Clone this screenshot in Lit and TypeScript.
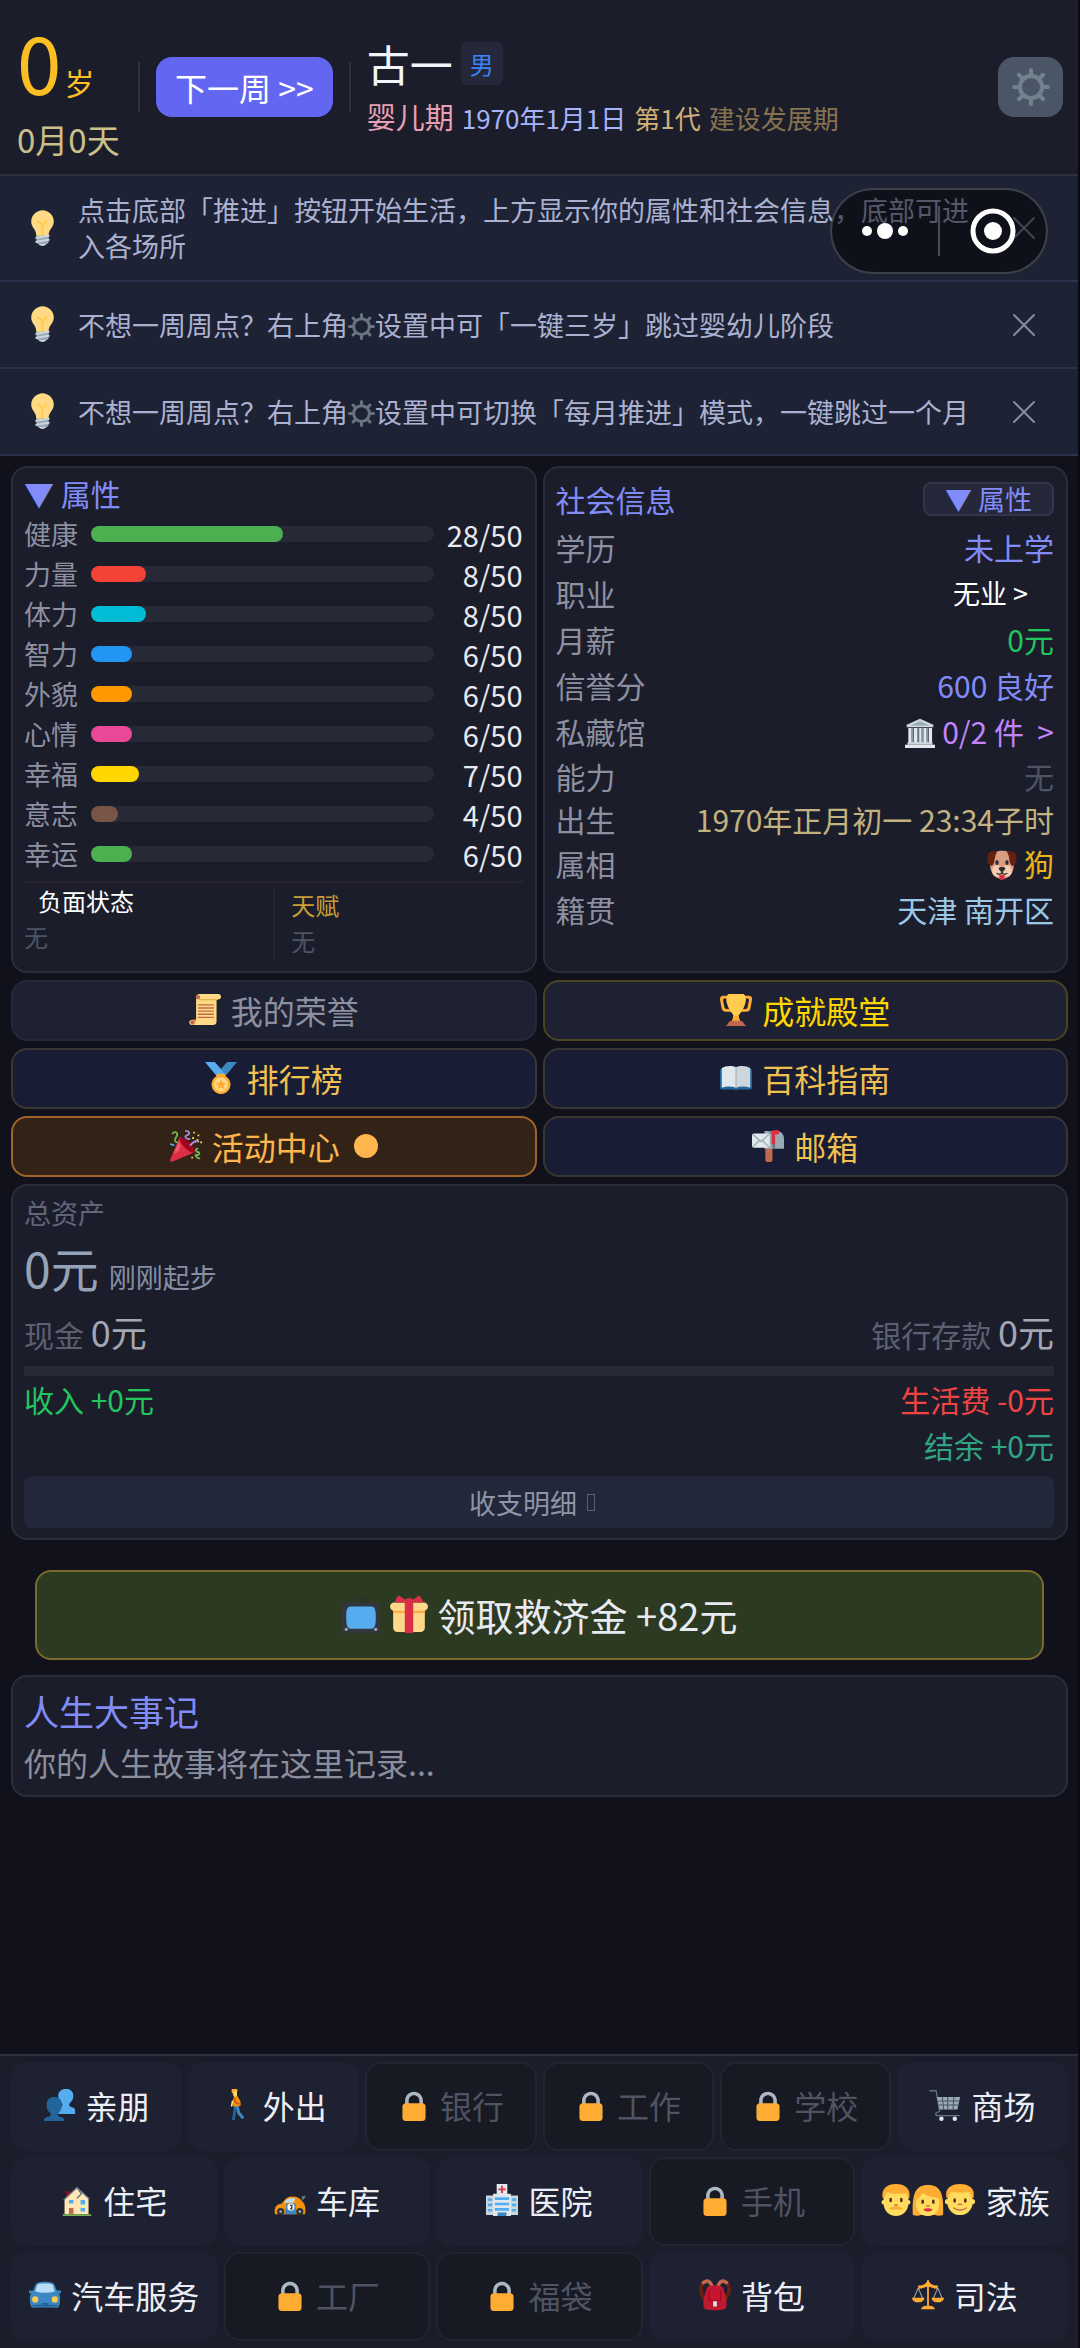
import { LitElement, html, svg, css, nothing } from 'lit';
import { customElement, property, state } from 'lit/decorators.js';
import { classMap } from 'lit/directives/class-map.js';

// every icon is drawn on a 36 x 36 grid
const icons = {
  bulb: svg`
    <path fill="#FFD983" d="M29 11.06c0 6.439-5 7.439-5 13.44 0 3.098-3.123 3.359-5.5 3.359-2.053 0-6.586-.779-6.586-3.361C11.914 18.5 7 17.5 7 11.06 7 5.029 12.285.14 18.083.14 23.883.14 29 5.029 29 11.06z"/>
    <path fill="#CCD6DD" d="M22.167 32.5c0 .828-2.234 2.5-4.167 2.5s-4.167-1.672-4.167-2.5 2.233-.5 4.167-.5 4.167-.328 4.167.5z"/>
    <path fill="#FFCC4D" d="M22.707 10.293a1 1 0 0 0-1.414 0L18 13.586l-3.293-3.293a1 1 0 0 0-1.414 1.414L17 15.414V26a1 1 0 0 0 2 0V15.414l3.707-3.707a1 1 0 0 0 0-1.414z"/>
    <path fill="#99AAB5" d="M24 31a2 2 0 0 1-2 2h-8a2 2 0 0 1-2-2v-6h12v6z"/>
    <path fill="none" stroke="#CCD6DD" stroke-width="2" stroke-linecap="round" d="M12 31l12-2M12 27l12-2"/>`,
  gear: svg`
    <circle cx="18" cy="18" r="10.5" fill="none" stroke="currentColor" stroke-width="4"/>
    <path fill="none" stroke="currentColor" stroke-width="4" stroke-linecap="round" d="M18 6V2M18 30v4M6 18H2M30 18h4M9.5 9.5L6.7 6.7M26.500 26.500l2.800 2.800M26.500 9.500l2.800-2.800M9.500 26.500l-2.800 2.800"/>`,
  museum: svg`
    <path fill="#CCD6DD" d="M18 1L2 8v3h32V8z"/>
    <path fill="#99AAB5" d="M18 4L7 9h22z"/>
    <path fill="#E1E8ED" d="M4 12h4v18H4zM10.500 12h4v18h-4zM17 12h3v18h-3zM22 12h4v18h-4zM28.500 12h4v18h-4z"/>
    <path fill="#8899A6" d="M8 12h2v18H8zM14.500 12h2v18h-2zM20 12h2v18h-2zM26 12h2v18h-2z"/>
    <path fill="#CCD6DD" d="M3 29h30v3H3z"/>
    <path fill="#E1E8ED" d="M0 32h36v4H0z"/>`,
  dog: svg`
    <path fill="#D99E82" d="M6 8C6 4 11 1 18 1s12 3 12 7c2 7 3 12 1 17-1 5-7 10-13 10S6 30 5 25C3 20 4 15 6 8z"/>
    <path fill="#662113" d="M12 2C8 1 2 2 1 6c-1 5 0 13 4 13s4-8 5-12zM24 2c4-1 10 0 11 4 1 5 0 13-4 13s-4-8-5-12z"/>
    <ellipse cx="12" cy="25" rx="6" ry="7" fill="#F7CBB2"/>
    <ellipse cx="24" cy="25" rx="6" ry="7" fill="#F7CBB2"/>
    <path fill="#DD2E44" d="M15 30h6v3a3 3 0 0 1-6 0z"/>
    <ellipse cx="12" cy="15" rx="2" ry="3" fill="#292F33"/>
    <ellipse cx="24" cy="15" rx="2" ry="3" fill="#292F33"/>
    <path fill="#292F33" d="M14 22c0-2 8-2 8 0s-2 3-3 4v2h-2v-2c-1-1-3-2-3-4z"/>
    <path fill="none" stroke="#292F33" stroke-width="1.500" stroke-linecap="round" d="M12 28c2 2 5 1 6-1 1 2 4 3 6 1"/>`,
  scroll: svg`
    <path fill="#FFD983" d="M8 4c0-2 1-4 4-4h21c4 0 4 6 0 6l-2 1v24c0 3-2 4-4 4H4c-5 0-5-6 0-6h4z"/>
    <path fill="#E39F3D" d="M10 6h21v1H12zM4 29h4v2H5z"/>
    <circle cx="10" cy="3.500" r="2.500" fill="#C1694F"/>
    <circle cx="4" cy="32" r="2.500" fill="#C1694F"/>
    <path fill="#C1694F" d="M10 11.500h18v1.500H10zM10 15h18v1.500H10zM10 18.500h18V20H10zM10 22h18v1.500H10zM10 25.500h18V27H10z"/>`,
  trophy: svg`
    <path fill="#FFAC33" d="M5.123 5h6C12.227 5 13 4.896 13 6V4c0-1.104-.773-2-1.877-2h-8c-2 0-3.583 2.125-3 5 0 0 1.791 9.375 1.917 9.958C2.373 18.500 4.164 20 6.081 20h6.958c1.105 0-.039-1.896-.039-3v-2c0 1.104-.773 2-1.877 2h-4c-1.104 0-1.833-1.042-2-2S3.539 7.667 3.539 7.667C3.206 5.750 4.018 5 5.123 5zm25.812 0h-6C23.831 5 22 4.896 22 6V4c0-1.104 1.831-2 2.935-2h8c2 0 3.584 2.125 3 5 0 0-1.633 9.419-1.771 10-.354 1.500-2.042 3-4 3h-7.146C21.914 20 22 18.104 22 17v-2c0 1.104 1.831 2 2.935 2h4c1.104 0 1.834-1.042 2-2s1.584-7.333 1.584-7.333C32.851 5.750 32.040 5 30.935 5zM15 22h6c0 7 3 10 3 10H12s3-3 3-10z"/>
    <path fill="#FFCC4D" d="M29.123 6.577c0 6.775-6.770 18.423-11 18.423-4.231 0-11-11.649-11-18.423C7.123.757 9.893 0 9.893 0h16.460s2.770.757 2.770 6.577z"/>
    <path fill="#C1694F" d="M27 34c0-3-3-4-5-4h-8c-2 0-5 1-5 4-2 0-2 2-2 2h22s0-2-2-2z"/>`,
  medal: svg`
    <path fill="#55ACEE" d="M18 8l-7-8H0l14 17 11.521-4.750z"/>
    <path fill="#3B88C3" d="M25 0l-7 8 5.390 7.312 1.227-1.489L36 0z"/>
    <path fill="#FFAC33" d="M23.205 16.026c.080-.217.131-.448.131-.693a2 2 0 0 0-2-2h-6.667a2 2 0 0 0-2 2c0 .245.050.476.131.693A10.667 10.667 0 1 0 23.205 16.026z"/>
    <circle fill="#FFD983" cx="18" cy="25.333" r="8"/>
    <path fill="#FFAC33" d="M18 19l1.600 4.300 4.600.200-3.600 2.900 1.200 4.400-3.800-2.500-3.800 2.500 1.200-4.400-3.600-2.900 4.600-.200z"/>`,
  book: svg`
    <path fill="#226699" d="M0 10c0-2 1-3 2-3h32c1 0 2 1 2 3v18c0 2-1 3-2 3H20c0 1-4 1-4 0H2c-1 0-2-1-2-3z"/>
    <path fill="#E1E8ED" d="M2 7c4-3 12-3 16-1v23c-5-2-11-2-16 0z"/>
    <path fill="#CCD6DD" d="M34 7c-4-3-12-3-16-1v23c5-2 11-2 16 0z"/>
    <path fill="#99AAB5" d="M17.500 5h1v24h-1z"/>`,
  party: svg`
    <path fill="#DD2E44" d="M11 8L.500 32.500C-.500 35 1 36 3 35.500L28 25c1-3-15-18-17-17z"/>
    <path fill="#EA596E" d="M10 12L4 27c3-1 7-4 8-9z"/>
    <ellipse cx="19.500" cy="17" rx="4" ry="11.500" transform="rotate(-45 19.500 17)" fill="#A0041E"/>
    <path fill="none" stroke="#77B255" stroke-width="2" stroke-linecap="round" d="M3 4c3-4 7 0 4 4s-1 5 1 6M31 21c-4 1-1 4 1 4s1 4-2 3 0 4 3 4"/>
    <path fill="none" stroke="#AA8DD8" stroke-width="2" stroke-linecap="round" d="M18 1c4 0 5 4 1 5s0 5 3 4M23 17c3-4 6-5 9-4"/>
    <path fill="none" stroke="#55ACEE" stroke-width="2" stroke-linecap="round" d="M1 16l3 1"/>
    <path fill="#FFCC4D" d="M26 2h2v2h-2zM31 5h2v2h-2zM25 8h2v2h-2zM30 10h2v2h-2zM24 30h2v2h-2zM34 13h2v2h-2z"/>`,
  mailbox: svg`
    <path fill="#C1694F" d="M15 19h8v15c0 3-8 3-8 0z"/>
    <path fill="#99AAB5" d="M14 1h13c6 0 9 4 9 9v11H14z"/>
    <path fill="#66757F" d="M23 21V9c0-4-3-7-5-8 5 0 8 3 8 8v12z"/>
    <rect x="0" y="4" width="20" height="16" rx="2" fill="#E1E8ED"/>
    <path fill="none" stroke="#99AAB5" stroke-width="1.500" d="M1 5l9 8 9-8M1 19l7-7M19 19l-7-7"/>
    <path fill="#DD2E44" d="M22 15V4c0-3 2-4 4-4h3c2 0 2 5 0 5h-3v10c0 2-4 2-4 0z"/>`,
  tv: svg`
    <path fill="none" stroke="#292F33" stroke-width="1.500" stroke-linecap="round" d="M18 7L12 1M18 7l6-5"/>
    <rect x="0" y="7" width="36" height="29" rx="3" fill="#31373D"/>
    <path fill="#55ACEE" d="M32 21c0 8-1 11-5 11H9c-4 0-5-3-5-11s1-10 5-10h18c4 0 5 2 5 10z"/>
    <circle cx="4" cy="32.500" r="1.500" fill="#99AAB5"/>
    <circle cx="32" cy="32.500" r="1.500" fill="#99AAB5"/>`,
  gift: svg`
    <path fill="#FDD888" d="M33 31c0 2.200-1.800 4-4 4H7c-2.200 0-4-1.800-4-4V14c0-2.200 1.800-4 4-4h22c2.200 0 4 1.800 4 4z"/>
    <path fill="#FDD888" d="M36 11c0 2.200-1.800 4-4 4H4c-2.200 0-4-1.800-4-4s1.800-4 4-4h28c2.200 0 4 1.800 4 4z"/>
    <path fill="#FCAB40" d="M3 15h30v2H3z"/>
    <path fill="#DA2F47" d="M19 3h-2a3 3 0 0 0-3 3v30h8V6a3 3 0 0 0-3-3z"/>
    <path fill="#DA2F47" d="M16 7c1.100 0 1.263-.516.361-1.147L9.639 1.147a1.795 1.795 0 0 0-2.631.589L4.992 5.264C4.446 6.219 4.900 7 6 7zM20 7c-1.100 0-1.263-.516-.361-1.147l6.723-4.706a1.796 1.796 0 0 1 2.631.589l2.016 3.527C31.554 6.219 31.100 7 30 7z"/>`,
  friends: svg`
    <path fill="#55ACEE" d="M35 24c0-3-3-3-5-4-2-1-2-3-1-4 2-2 4-4 4-8 0-5-3-8-8-8-6 0-9 3-9 8 0 4 2 6 4 8 1 1 1 3-1 4l-3 3v5h19z"/>
    <path fill="#269" d="M23 36c0-4-3-4-6-5-2-1-2-3-1-4 3-2 4-5 4-9 0-6-3-9-8-9-6 0-9 3-9 9 0 4 1 7 4 9 1 1 1 3-1 4-3 1-6 1-6 5z"/>`,
  walk: svg`
    <path fill="none" stroke="#269" stroke-width="3" stroke-linejoin="round" d="M16 19l-1 8-1 8"/>
    <path fill="none" stroke="#3B88C3" stroke-width="3.500" stroke-linejoin="round" d="M18 19l2 8 5 6"/>
    <path fill="#F4900C" d="M15 7h3l4 7v5l-8 1-1-6z"/>
    <path fill="none" stroke="#DD551F" stroke-width="2" d="M15 10l1 5 5 2"/>
    <path fill="#FFDC5D" d="M13 2h5v5l-2 2-2-1z"/>
    <path fill="#FFAC33" d="M12 0h6l1 2-4 1-1 3-2-2z"/>
    <path fill="none" stroke="#FFDC5D" stroke-width="2" stroke-linecap="round" d="M13 14l-1 5"/>`,
  lock: svg`
    <path fill="#AAB8C2" d="M18 3C12.477 3 8 7.477 8 13v10h4V13c0-3.313 2.686-6 6-6s6 2.687 6 6v10h4V13c0-5.523-4.477-10-10-10z"/>
    <path fill="#FFAC33" d="M31 32a4 4 0 0 1-4 4H9a4 4 0 0 1-4-4V20a4 4 0 0 1 4-4h18a4 4 0 0 1 4 4z"/>`,
  cart: svg`
    <path fill="none" stroke="#66757F" stroke-width="1.500" stroke-linecap="round" stroke-linejoin="round" d="M1 2h7l4 23-4 2c-1 2 0 3 2 3h24"/>
    <path fill="#99AAB5" d="M9 9h26l-3 14H12z"/>
    <path fill="none" stroke="#4a5560" stroke-width="1.200" d="M10 13.500h24M11 18h22.500M15 9l1.500 14M21 9v14M28 9l-1 14"/>
    <circle cx="14" cy="33.500" r="2.500" fill="#E1E8ED"/>
    <circle cx="29" cy="33.500" r="2.500" fill="#E1E8ED"/>`,
  house: svg`
    <path fill="#A0041E" d="M6 8h4v9H6z"/>
    <path fill="#FFE8B6" d="M4 17L18 4l13 12v18H4z"/>
    <path fill="none" stroke="#66757F" stroke-width="1.500" d="M3 18L18 4l5 7-5 5"/>
    <path fill="none" stroke="#66757F" stroke-width="1.500" d="M18 4l14 13"/>
    <path fill="#55ACEE" d="M9 18h5v4H9zM22 18h5v5h-5zM22 27h5v4h-5z"/>
    <path fill="#C1694F" d="M9 27h5v7H9z"/>
    <path fill="#77B255" d="M2 34h32v2H2z"/>`,
  racer: svg`
    <path fill="#66757F" d="M31 14l4-1v2l-3 4z"/>
    <path fill="#F4900C" d="M1 34c-1-8 1-11 8-12 3-5 6-8 11-8 6 0 10 2 12 6 3 2 4 8 3 14z"/>
    <path fill="#BBDDF5" d="M11 21c2-3 5-5 8-5h5l-2 5z"/>
    <path fill="#3B88C3" d="M14 22h10l1 12H12z"/>
    <circle cx="19" cy="26" r="4" fill="#FFF"/>
    <path fill="none" stroke="#292F33" stroke-width="1.500" d="M18 24h2v4h-2"/>
    <circle cx="7.500" cy="31" r="4" fill="#292F33"/>
    <circle cx="29" cy="31" r="4" fill="#292F33"/>
    <circle cx="7.500" cy="31" r="1.600" fill="#99AAB5"/>
    <circle cx="29" cy="31" r="1.600" fill="#99AAB5"/>`,
  hospital: svg`
    <path fill="#E1E8ED" d="M12 0h12v12H12z"/>
    <path fill="#DD2E44" d="M17 2h2v3h3v2h-3v3h-2V7h-3V5h3z"/>
    <path fill="#CCD6DD" d="M0 13h9v22H0zM27 13h9v22h-9z"/>
    <path fill="#E1E8ED" d="M8 11h20v25H8z"/>
    <path fill="#55ACEE" d="M10 15h16v3H10zM10 21h16v3H10zM10 27h16v3H10zM2 16h5v3H2zM2 22h5v3H2zM2 28h5v3H2zM29 16h5v3h-5zM29 22h5v3h-5zM29 28h5v3h-5z"/>
    <path fill="#3B88C3" d="M13 32h10v4H13z"/>`,
  man: svg`
    <path fill="#FFDC5D" d="M4 12c0-7 6-11 14-11s14 4 14 11v6c3 0 3 5 0 5-1 8-7 13-14 13S5 31 4 23c-3 0-3-5 0-5z"/>
    <path fill="#FFAC33" d="M3 16C1 5 8 0 18 0s17 5 15 16c-2 0-2-4-4-6-4 1-16 2-20-1-3 2-4 7-6 7z"/>
    <path fill="#FFAC33" d="M10 28c3-4 13-4 16 0-3 1-13 1-16 0z"/>
    <ellipse cx="12" cy="18" rx="1.500" ry="2.500" fill="#662113"/>
    <ellipse cx="24" cy="18" rx="1.500" ry="2.500" fill="#662113"/>
    <path fill="#C1694F" d="M16 23h4v1.500h-4z"/>`,
  woman: svg`
    <path fill="#FFAC33" d="M1 35C0 12 3 1 18 1s18 11 17 34c-3 1-7 1-9 0H10c-2 1-6 1-9 0z"/>
    <path fill="#FFDC5D" d="M5 18c2-2 5-4 7-8 5 4 14 5 18 6 3 10-2 20-12 20S3 28 5 18z"/>
    <ellipse cx="12" cy="20" rx="1.500" ry="2.500" fill="#662113"/>
    <ellipse cx="24" cy="20" rx="1.500" ry="2.500" fill="#662113"/>
    <path fill="#DD2E44" d="M13 28c3-1 7-1 10 0-1 4-9 4-10 0z"/>
    <path fill="#C1694F" d="M16 24h4v1.500h-4z"/>`,
  boy: svg`
    <path fill="#FFDC5D" d="M4 12c0-7 6-11 14-11s14 4 14 11v5c4 0 4 6 0 6-1 7-7 12-14 12S5 30 4 23c-4 0-4-6 0-6z"/>
    <path fill="#FFAC33" d="M3 16C0 5 8 0 18 0s18 5 15 16c-3 0-2-5-5-7-4 1-16 1-20 0-3 2-2 7-5 7z"/>
    <ellipse cx="12" cy="18.500" rx="1.500" ry="2.500" fill="#662113"/>
    <ellipse cx="24" cy="18.500" rx="1.500" ry="2.500" fill="#662113"/>
    <path fill="none" stroke="#C1694F" stroke-width="1.500" stroke-linecap="round" d="M16 23h4M11 27c4 3 10 3 14 0"/>`,
  car: svg`
    <path fill="#269" d="M3 27h6v5H3zM27 27h6v5h-6z"/>
    <path fill="#3B88C3" d="M7 7c1-3 4-4 11-4s10 1 11 4l3 8c3 2 3 4 3 8s-1 9-3 9H4c-2 0-3-5-3-9s0-6 3-8z"/>
    <path fill="#3B88C3" d="M0 13h6v3H0zM30 13h6v3h-6z"/>
    <path fill="#BBDDF5" d="M9 7c1-2 4-2 9-2s8 0 9 2l2 7c-7 2-15 2-22 0z"/>
    <path fill="#269" d="M14 27h8v2h-8zM4 29h28v2H4z"/>
    <circle cx="7" cy="23" r="3.500" fill="#FFCC4D"/>
    <circle cx="29" cy="23" r="3.500" fill="#FFCC4D"/>`,
  backpack: svg`
    <path fill="none" stroke="#662113" stroke-width="4" d="M10 3C2 3 1 10 3 17l5 9M26 3c8 0 9 7 7 14l-5 9"/>
    <path fill="none" stroke="#C1694F" stroke-width="4" stroke-linecap="round" d="M5 4c5-4 8-1 10 5M31 4c-5-4-8-1-10 5"/>
    <path fill="#BE1931" d="M8 13c0-4 3-6 10-6s10 2 10 6c3 6 4 17 2 20-1 3-23 3-24 0-2-3-1-14 2-20z"/>
    <path fill="#A0041E" d="M11 13h14v12H11z"/>
    <path fill="#C8152F" d="M12 12h12v12H12z"/>
    <path fill="#E1E8ED" d="M16 25h4v6h-4z"/>`,
  scales: svg`
    <path fill="none" stroke="#99AAB5" stroke-width="1.200" d="M7 10L2 22M7 10l5 12M29 10l5 12M29 10l-5 12"/>
    <path fill="#FFAC33" d="M17 1h2v4c3 0 5 3 10 2v4c-5 0-7-2-10-2v21c4 0 6 1 7 4H10c1-3 3-4 7-4V9c-3 0-5 2-10 2V7c5 1 7-2 10-2z"/>
    <path fill="#FFAC33" d="M0 21h14c0 7-14 7-14 0zM22 21h14c0 7-14 7-14 0z"/>
    <circle cx="18" cy="6" r="3" fill="#FFAC33"/>`,
  cross: svg`<path fill="none" stroke="currentColor" stroke-width="3" stroke-linecap="round" d="M3 3l30 30M33 3L3 33"/>`,
};

type IconName = keyof typeof icons;

@customElement('game-icon')
export class GameIcon extends LitElement {
  static styles = css`
    :host {
      display: inline-block;
      width: 1em;
      height: 1em;
      vertical-align: -4px;
    }

    svg {
      display: block;
      width: 100%;
      height: 100%;
    }
  `;

  @property() name: IconName = 'lock';

  render() {
    return html`<svg viewBox="0 0 36 36" aria-hidden="true">${icons[this.name]}</svg>`;
  }
}

const stats = [
  { label: '健康', value: 28, color: '#4caf50' },
  { label: '力量', value: 8, color: '#f44336' },
  { label: '体力', value: 8, color: '#00bcd4' },
  { label: '智力', value: 6, color: '#2196f3' },
  { label: '外貌', value: 6, color: '#ff9800' },
  { label: '心情', value: 6, color: '#ec4899' },
  { label: '幸福', value: 7, color: '#ffd600' },
  { label: '意志', value: 4, color: '#795548' },
  { label: '幸运', value: 6, color: '#4caf50' },
];

interface Place {
  label: string;
  icons: IconName[];
  locked?: boolean;
}

const locked = (label: string): Place => ({ label, icons: ['lock'], locked: true });

const navRows: Place[][] = [
  [
    { label: '亲朋', icons: ['friends'] },
    { label: '外出', icons: ['walk'] },
    locked('银行'),
    locked('工作'),
    locked('学校'),
    { label: '商场', icons: ['cart'] },
  ],
  [
    { label: '住宅', icons: ['house'] },
    { label: '车库', icons: ['racer'] },
    { label: '医院', icons: ['hospital'] },
    locked('手机'),
    { label: '家族', icons: ['man', 'woman', 'boy'] },
  ],
  [
    { label: '汽车服务', icons: ['car'] },
    locked('工厂'),
    locked('福袋'),
    { label: '背包', icons: ['backpack'] },
    { label: '司法', icons: ['scales'] },
  ],
];

@customElement('app-root')
export class AppRoot extends LitElement {
  static styles = css`
    :host {
      display: flex;
      flex-direction: column;
      box-sizing: border-box;
      position: relative;
      min-height: 100vh;
      border-right: 2px solid #0a0a10;
      background: #11111b;
      color: #e8eaf2;
      font-family: "Noto Sans CJK SC", sans-serif;
      font-size: 30px;
    }

    * {
      box-sizing: border-box;
    }

    button {
      margin: 0;
      padding: 0;
      border: none;
      background: none;
      color: inherit;
      font: inherit;
      cursor: pointer;
    }

    h2 {
      margin: 0;
      font-size: 30px;
      font-weight: 400;
      color: #818cf8;
    }

    /* top bar */
    .header {
      display: flex;
      align-items: center;
      gap: 16px;
      min-height: 176px;
      padding: 0 15px 0 17px;
      background: #1c1d2b;
      border-bottom: 2px solid #2e303f;
    }

    .age {
      min-width: 105px;
    }

    .years {
      display: flex;
      align-items: baseline;
      gap: 3px;
      line-height: 104px;
      font-size: 80px;
      color: #fbbf24;
    }

    .years small {
      font-size: 30px;
      line-height: 30px;
    }

    .days {
      font-size: 33px;
      line-height: 54px;
      color: #c9c08a;
    }

    .divider {
      width: 2px;
      height: 50px;
      background: #2e303f;
    }

    .next {
      height: 60px;
      padding: 0 19px;
      border-radius: 16px;
      background: #6366f1;
      color: #fff;
      font-size: 32px;
      line-height: 56px;
    }

    .person {
      flex: 1;
      padding-top: 4px;
    }

    .name {
      display: flex;
      align-items: center;
      gap: 8px;
      font-size: 43px;
      line-height: 56px;
      color: #f4f5fb;
    }

    .gender {
      padding: 0 9px;
      border-radius: 6px;
      background: #25273a;
      color: #3b82f6;
      font-size: 24px;
      line-height: 43px;
    }

    .life {
      display: flex;
      align-items: baseline;
      gap: 8px;
      font-size: 26px;
      line-height: 50px;
    }

    .stage {
      font-size: 29px;
      color: #e8a0b4;
    }

    .date { color: #a5b4fc; }
    .generation { color: #cfae78; }
    .era { color: #857350; }

    .settings {
      display: flex;
      align-items: center;
      justify-content: center;
      width: 65px;
      height: 60px;
      border-radius: 16px;
      background: #4a5565;
      color: #6f828e;
      font-size: 38px;
    }

    /* hints */
    .tip {
      display: flex;
      align-items: center;
      gap: 17px;
      min-height: 87px;
      padding: 16px 30px 16px 24px;
      background: #1e2235;
      border-bottom: 2px solid #2d3150;
      color: #abb1d0;
      font-size: 27px;
      line-height: 36px;
    }

    .tip p {
      flex: 1;
      margin: 0;
    }

    .tip p game-icon {
      color: #66757f;
    }

    .bulb {
      font-size: 37px;
    }

    .close {
      display: flex;
      justify-content: center;
      width: 48px;
      color: #858a9e;
      font-size: 24px;
    }

    /* floating host capsule */
    .capsule {
      position: absolute;
      top: 188px;
      right: 30px;
      display: flex;
      align-items: center;
      width: 218px;
      height: 86px;
      border: 2px solid rgba(255, 255, 255, 0.2);
      border-radius: 43px;
      background: rgba(0, 0, 0, 0.5);
    }

    .capsule button {
      flex: 1;
      height: 100%;
    }

    .capsule svg {
      display: block;
      margin: 0 auto;
    }

    .capsule .divider {
      background: rgba(255, 255, 255, 0.25);
    }

    /* content */
    .content {
      flex: 1;
      display: flex;
      flex-direction: column;
      gap: 7px;
      padding: 10px 10px 10px 11px;
    }

    .columns {
      display: grid;
      grid-template-columns: 1fr 1fr;
      gap: 7px 6px;
    }

    .card {
      padding: 6px 12px 10px 11px;
      border: 2px solid #2a2d3a;
      border-radius: 16px;
      background: #1b1d2b;
    }

    .card.stats {
      padding-bottom: 12px;
    }

    .stats h2 button {
      display: block;
      line-height: 38px;
    }

    .stat {
      display: flex;
      align-items: center;
      height: 40px;
      font-size: 27px;
      line-height: 38px;
    }

    .stats .stat:first-of-type {
      margin-top: 2px;
    }

    .stat .label {
      width: 67px;
      color: #8d90a0;
    }

    .track {
      flex: 1;
      height: 16px;
      border-radius: 8px;
      background: #282937;
    }

    .fill {
      height: 100%;
      border-radius: 8px;
    }

    .amount {
      width: 89px;
      text-align: right;
      font-size: 29px;
    }

    .effects {
      display: grid;
      grid-template-columns: 1fr 1fr;
      margin-top: 7px;
      border-top: 2px solid #2a242c;
      font-size: 24px;
      line-height: 36px;
    }

    .negative button {
      display: block;
      padding-left: 14px;
      color: #fff;
    }

    .talent {
      margin-top: 4px;
      padding-left: 16px;
      border-left: 2px solid #27232d;
    }

    .talent .title {
      color: #c79f36;
    }

    .none {
      color: #4b5563;
    }

    .social-head,
    .social-row {
      display: flex;
      align-items: center;
      justify-content: space-between;
    }

    .social-head {
      height: 50px;
    }

    .toggle {
      height: 34px;
      padding: 0 20px;
      border: 2px solid #33364a;
      border-radius: 8px;
      background: #25273a;
      color: #818cf8;
      font-size: 27px;
      line-height: 28px;
    }

    .social-row {
      height: 46px;
      line-height: 40px;
    }

    .social-row.compact {
      height: 43px;
    }

    .social-row .label {
      color: #8d90a0;
    }

    .job {
      padding-right: 26px;
      color: #fff;
      font-size: 27px;
    }

    .museum {
      color: #c084fc;
      white-space: pre;
    }

    .indigo { color: #818cf8; }
    .green { color: #22c55e; }
    .red { color: #ef4444; }
    .teal { color: #2fa583; }
    .sand { color: #c2b280; }
    .gold { color: #eab31c; }
    .sky { color: #9cc8e8; }

    .link {
      display: flex;
      align-items: center;
      justify-content: center;
      gap: 10px;
      height: 61px;
      padding-bottom: 2px;
      border: 2px solid #3a3632;
      border-radius: 16px;
      background: #181d35;
      color: #f0c050;
      font-size: 32px;
    }

    .link.honor {
      border-color: #25283a;
      background: #1e2132;
      color: #8d90a0;
    }

    .link.achieve {
      border-color: #4a4420;
      background: #1e2132;
      color: #ffd600;
    }

    .link.event {
      border-color: #a0642a;
      background: #332316;
      color: #ffb54d;
    }

    .dot {
      width: 24px;
      height: 24px;
      margin-left: 4px;
      border-radius: 50%;
      background: #ffb54d;
    }

    /* money */
    .caption {
      font-size: 27px;
      line-height: 42px;
      color: #60667a;
    }

    .total {
      display: flex;
      align-items: baseline;
      gap: 10px;
      line-height: 66px;
      font-size: 48px;
      color: #94a3b8;
    }

    .total small {
      font-size: 27px;
      line-height: 36px;
      color: #858ea3;
    }

    .balances,
    .flow {
      display: flex;
      justify-content: space-between;
    }

    .balances {
      margin-top: 3px;
      line-height: 56px;
      color: #5c6172;
    }

    .balances b {
      font-weight: 400;
      font-size: 36px;
      color: #a3a6b3;
    }

    .ratio {
      height: 10px;
      margin-top: 4px;
      background: #282937;
    }

    .flow {
      line-height: 46px;
      text-align: right;
    }

    .details {
      display: flex;
      align-items: center;
      justify-content: center;
      gap: 10px;
      width: 100%;
      height: 52px;
      margin-top: 8px;
      border-radius: 8px;
      background: #23273a;
      color: #8f95a6;
      font-size: 27px;
    }

    .missing {
      width: 8px;
      height: 17px;
      margin-right: 14px;
      border: 1px solid #5a6072;
    }

    .relief {
      display: flex;
      align-items: center;
      justify-content: center;
      gap: 10px;
      height: 90px;
      margin: 23px 24px 8px;
      padding-bottom: 2px;
      border: 2px solid #7a6a2e;
      border-radius: 16px;
      background: #2d3a22;
      font-size: 38px;
    }

    .story h2 {
      font-size: 35px;
      line-height: 56px;
    }

    .story p {
      margin: 0;
      font-size: 32px;
      line-height: 46px;
      color: #8b8f9d;
    }

    /* bottom places */
    .nav {
      display: flex;
      flex-direction: column;
      gap: 6px;
      padding: 6px 10px 7px 11px;
      border-top: 2px solid #2e303f;
      background: #1c1d2b;
    }

    .nav-row {
      display: grid;
      grid-auto-flow: column;
      grid-auto-columns: minmax(0, 1fr);
      gap: 6px;
    }

    .place {
      display: flex;
      align-items: center;
      justify-content: center;
      gap: 10px;
      height: 89px;
      padding-bottom: 4px;
      border: 2px solid #1e2132;
      border-radius: 16px;
      background: #1e2132;
      color: #eceef5;
      font-size: 32px;
      white-space: nowrap;
    }

    .place span {
      display: flex;
    }

    .place.locked {
      border-color: #222431;
      background: #171923;
      color: #4f5362;
    }
  `;

  @state() private closedTips: number[] = [];
  @state() private statsOpen = true;

  private tips = [
    html`点击底部「推进」按钮开始生活，上方显示你的属性和社会信息，底部可进入各场所`,
    html`不想一周周点？右上角<game-icon name="gear"></game-icon>设置中可「一键三岁」跳过婴幼儿阶段`,
    html`不想一周周点？右上角<game-icon name="gear"></game-icon>设置中可切换「每月推进」模式，一键跳过一个月`,
  ];

  private closeTip(index: number) {
    this.closedTips = [...this.closedTips, index];
  }

  private toggleStats() {
    this.statsOpen = !this.statsOpen;
  }

  renderHeader() {
    return html`
      <header class="header">
        <div class="age">
          <div class="years">0<small>岁</small></div>
          <div class="days">0月0天</div>
        </div>
        <div class="divider"></div>
        <button class="next">下一周 &gt;&gt;</button>
        <div class="divider"></div>
        <div class="person">
          <div class="name">古一<span class="gender">男</span></div>
          <div class="life">
            <span class="stage">婴儿期</span>
            <span class="date">1970年1月1日</span>
            <span class="generation">第1代</span>
            <span class="era">建设发展期</span>
          </div>
        </div>
        <button class="settings" aria-label="设置"><game-icon name="gear"></game-icon></button>
      </header>
    `;
  }

  renderTips() {
    return this.tips.map((tip, i) => this.closedTips.includes(i) ? nothing : html`
      <div class="tip">
        <game-icon class="bulb" name="bulb"></game-icon>
        <p>${tip}</p>
        <button class="close" aria-label="关闭" @click="${() => this.closeTip(i)}">
          <game-icon name="cross"></game-icon>
        </button>
      </div>
    `);
  }

  renderStats() {
    return html`
      <section class="card stats">
        <h2><button @click="${this.toggleStats}">▼ 属性</button></h2>
        ${this.statsOpen ? stats.map(stat => html`
          <div class="stat">
            <span class="label">${stat.label}</span>
            <div class="track">
              <div class="fill" style="width: ${stat.value * 2}%; background: ${stat.color}"></div>
            </div>
            <span class="amount">${stat.value}/50</span>
          </div>
        `) : nothing}
        <div class="effects">
          <div class="negative">
            <button>负面状态</button>
            <div class="none">无</div>
          </div>
          <div class="talent">
            <div class="title">天赋</div>
            <div class="none">无</div>
          </div>
        </div>
      </section>
    `;
  }

  renderSocial() {
    return html`
      <section class="card">
        <div class="social-head">
          <h2>社会信息</h2>
          <button class="toggle" @click="${this.toggleStats}">▼ 属性</button>
        </div>
        <div class="social-row"><span class="label">学历</span><span class="indigo">未上学</span></div>
        <div class="social-row"><span class="label">职业</span><button class="job">无业 &gt;</button></div>
        <div class="social-row"><span class="label">月薪</span><span class="green">0元</span></div>
        <div class="social-row"><span class="label">信誉分</span><span class="indigo">600 良好</span></div>
        <div class="social-row">
          <span class="label">私藏馆</span>
          <button class="museum"><game-icon name="museum"></game-icon> 0/2 件  &gt;</button>
        </div>
        <div class="social-row compact"><span class="label">能力</span><span class="none">无</span></div>
        <div class="social-row compact"><span class="label">出生</span><span class="sand">1970年正月初一 23:34子时</span></div>
        <div class="social-row">
          <span class="label">属相</span>
          <span class="gold"><game-icon name="dog"></game-icon> 狗</span>
        </div>
        <div class="social-row"><span class="label">籍贯</span><span class="sky">天津 南开区</span></div>
      </section>
    `;
  }

  renderLinks() {
    return html`
      <button class="link honor"><game-icon name="scroll"></game-icon>我的荣誉</button>
      <button class="link achieve"><game-icon name="trophy"></game-icon>成就殿堂</button>
      <button class="link"><game-icon name="medal"></game-icon>排行榜</button>
      <button class="link"><game-icon name="book"></game-icon>百科指南</button>
      <button class="link event"><game-icon name="party"></game-icon>活动中心<span class="dot"></span></button>
      <button class="link"><game-icon name="mailbox"></game-icon>邮箱</button>
    `;
  }

  renderMoney() {
    return html`
      <section class="card">
        <div class="caption">总资产</div>
        <div class="total">0元<small>刚刚起步</small></div>
        <div class="balances">
          <span>现金 <b>0元</b></span>
          <span>银行存款 <b>0元</b></span>
        </div>
        <div class="ratio"></div>
        <div class="flow">
          <div class="green">收入 +0元</div>
          <div>
            <div class="red">生活费 -0元</div>
            <div class="teal">结余 +0元</div>
          </div>
        </div>
        <button class="details">收支明细<span class="missing"></span></button>
      </section>
    `;
  }

  renderNav() {
    return html`
      <nav class="nav">
        ${navRows.map(row => html`
          <div class="nav-row">
            ${row.map(place => html`
              <button class="${classMap({ place: true, locked: !!place.locked })}">
                <span>${place.icons.map(name => html`<game-icon name="${name}"></game-icon>`)}</span>${place.label}
              </button>
            `)}
          </div>
        `)}
      </nav>
    `;
  }

  render() {
    return html`
      ${this.renderHeader()}
      ${this.renderTips()}
      <main class="content">
        <div class="columns">
          ${this.renderStats()}
          ${this.renderSocial()}
          ${this.renderLinks()}
        </div>
        ${this.renderMoney()}
        <button class="relief">
          <game-icon name="tv"></game-icon><game-icon name="gift"></game-icon>领取救济金 +82元
        </button>
        <section class="card story">
          <h2>人生大事记</h2>
          <p>你的人生故事将在这里记录...</p>
        </section>
      </main>
      ${this.renderNav()}
      <div class="capsule">
        <button aria-label="更多">
          <svg width="48" height="18" viewBox="0 0 48 18" fill="#fff">
            <circle cx="6" cy="9" r="5"/><circle cx="24" cy="9" r="8"/><circle cx="42" cy="9" r="5"/>
          </svg>
        </button>
        <div class="divider"></div>
        <button aria-label="退出">
          <svg width="46" height="46" viewBox="0 0 46 46">
            <circle cx="23" cy="23" r="20" fill="none" stroke="#fff" stroke-width="5"/>
            <circle cx="23" cy="23" r="9" fill="#fff"/>
          </svg>
        </button>
      </div>
    `;
  }
}
